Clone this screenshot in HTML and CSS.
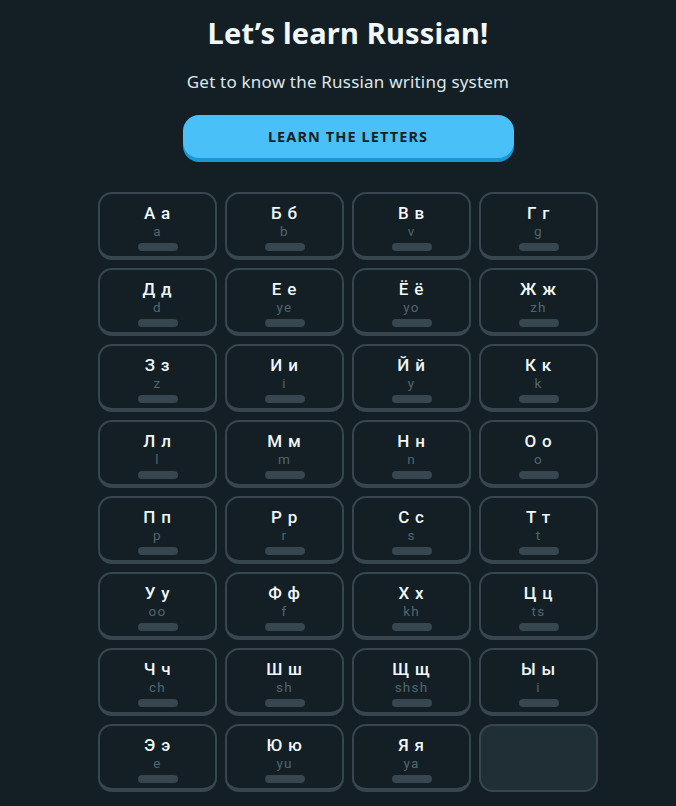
FILE: index.html
```html
<!DOCTYPE html>
<html lang="en">
<head>
  <meta charset="UTF-8">
  <title>Russian alphabet</title>
  <meta name="viewport" content="width=device-width, initial-scale=1.0"/>
  <link rel="stylesheet" href="styles.css">
</head>
<body>
  <main class="page">
    <h1 class="title">Let’s learn Russian!</h1>
    <p class="subtitle">Get to know the Russian writing system</p>
    <button class="learn-btn">LEARN THE LETTERS</button>

    <div class="letters">
      <div class="card"><div class="glyph">А а</div><div class="sound">a</div><div class="bar"></div></div>
      <div class="card"><div class="glyph">Б б</div><div class="sound">b</div><div class="bar"></div></div>
      <div class="card"><div class="glyph">В в</div><div class="sound">v</div><div class="bar"></div></div>
      <div class="card"><div class="glyph">Г г</div><div class="sound">g</div><div class="bar"></div></div>

      <div class="card"><div class="glyph">Д д</div><div class="sound">d</div><div class="bar"></div></div>
      <div class="card"><div class="glyph">Е е</div><div class="sound">ye</div><div class="bar"></div></div>
      <div class="card"><div class="glyph">Ё ё</div><div class="sound">yo</div><div class="bar"></div></div>
      <div class="card"><div class="glyph">Ж ж</div><div class="sound">zh</div><div class="bar"></div></div>

      <div class="card"><div class="glyph">З з</div><div class="sound">z</div><div class="bar"></div></div>
      <div class="card"><div class="glyph">И и</div><div class="sound">i</div><div class="bar"></div></div>
      <div class="card"><div class="glyph">Й й</div><div class="sound">y</div><div class="bar"></div></div>
      <div class="card"><div class="glyph">К к</div><div class="sound">k</div><div class="bar"></div></div>

      <div class="card"><div class="glyph">Л л</div><div class="sound">l</div><div class="bar"></div></div>
      <div class="card"><div class="glyph">М м</div><div class="sound">m</div><div class="bar"></div></div>
      <div class="card"><div class="glyph">Н н</div><div class="sound">n</div><div class="bar"></div></div>
      <div class="card"><div class="glyph">О о</div><div class="sound">o</div><div class="bar"></div></div>

      <div class="card"><div class="glyph">П п</div><div class="sound">p</div><div class="bar"></div></div>
      <div class="card"><div class="glyph">Р р</div><div class="sound">r</div><div class="bar"></div></div>
      <div class="card"><div class="glyph">С с</div><div class="sound">s</div><div class="bar"></div></div>
      <div class="card"><div class="glyph">Т т</div><div class="sound">t</div><div class="bar"></div></div>

      <div class="card"><div class="glyph">У у</div><div class="sound">oo</div><div class="bar"></div></div>
      <div class="card"><div class="glyph">Ф ф</div><div class="sound">f</div><div class="bar"></div></div>
      <div class="card"><div class="glyph">Х х</div><div class="sound">kh</div><div class="bar"></div></div>
      <div class="card"><div class="glyph">Ц ц</div><div class="sound">ts</div><div class="bar"></div></div>

      <div class="card"><div class="glyph">Ч ч</div><div class="sound">ch</div><div class="bar"></div></div>
      <div class="card"><div class="glyph">Ш ш</div><div class="sound">sh</div><div class="bar"></div></div>
      <div class="card"><div class="glyph">Щ щ</div><div class="sound">shsh</div><div class="bar"></div></div>
      <div class="card"><div class="glyph">Ы ы</div><div class="sound">i</div><div class="bar"></div></div>

      <div class="card"><div class="glyph">Э э</div><div class="sound">e</div><div class="bar"></div></div>
      <div class="card"><div class="glyph">Ю ю</div><div class="sound">yu</div><div class="bar"></div></div>
      <div class="card"><div class="glyph">Я я</div><div class="sound">ya</div><div class="bar"></div></div>
      <div class="card empty"></div>
    </div>
  </main>
</body>
</html>
```

FILE: styles.css
```css
body {
  background: #131f24;
  color: #f1f7fb;
  font-family: "Noto Sans", "DejaVu Sans", sans-serif;
  margin: 0;
}
.page {
  display: flex;
  flex-direction: column;
  align-items: center;
  padding: 14px 0 0 20px;
}
.title {
  font-size: 29px;
  font-weight: 700;
  line-height: 38px;
  margin: 0;
  letter-spacing: 0.2px;
}
.subtitle {
  font-size: 17px;
  color: #dce6ec;
  line-height: 24px;
  margin: 18px 0 0;
  letter-spacing: 0.2px;
}
.learn-btn {
  margin-top: 21px;
  width: 331px;
  height: 43px;
  padding: 0 0 1px;
  background: #49c0f8;
  border: none;
  border-radius: 16px;
  box-shadow: 0 4px 0 #1899d6;
  color: #131f24;
  font-family: inherit;
  font-size: 14.5px;
  font-weight: 700;
  letter-spacing: 1.1px;
  cursor: pointer;
}
.letters {
  margin-top: 34px;
  display: grid;
  grid-template-columns: repeat(4, 119px);
  grid-auto-rows: 68px;
  gap: 8px;
}
.card {
  box-sizing: border-box;
  border: 2px solid #37464f;
  border-bottom-width: 4px;
  border-radius: 14px;
  display: flex;
  flex-direction: column;
  align-items: center;
  padding-top: 9px;
  font-family: Roboto, "Noto Sans", sans-serif;
}
.glyph {
  font-size: 17px;
  font-weight: 500;
  line-height: 20px;
  letter-spacing: 0.8px;
}
.sound {
  font-size: 13.5px;
  color: #52656d;
  line-height: 16px;
  letter-spacing: 1.2px;
}
.bar {
  width: 40px;
  height: 8px;
  border-radius: 4px;
  background: #37464f;
  margin-top: 4px;
}
.empty {
  background: #202f36;
  border-bottom-width: 2px;
}
```
